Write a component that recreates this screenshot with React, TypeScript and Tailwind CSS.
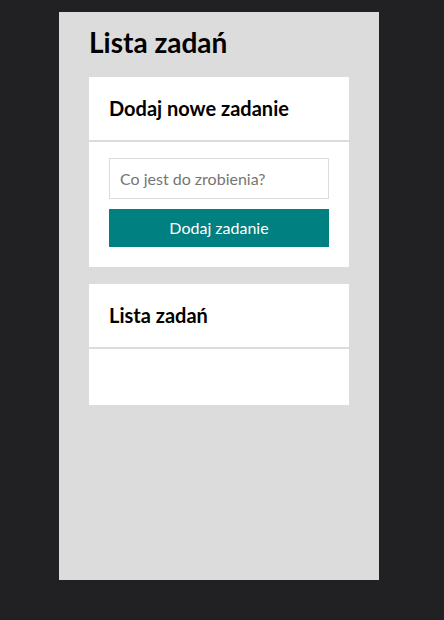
import { useState } from "react";

export default function App() {
  const [task, setTask] = useState("");
  const [tasks, setTasks] = useState<string[]>([]);

  const addTask = () => {
    if (!task.trim()) return;
    setTasks([...tasks, task.trim()]);
    setTask("");
  };

  return (
    <div
      className="min-h-screen bg-[#212123] pt-[12px] pl-[59px]"
      style={{ fontFamily: "Lato, 'Noto Sans', sans-serif" }}
    >
      <div className="flex h-[568px] w-[320px] flex-col bg-[#dcdcdc] px-[30px] pt-[13px]">
        <h1 className="mb-[18px] text-[28px] font-bold leading-[34px] text-black">
          Lista zadań
        </h1>

        <section className="bg-white">
          <h2 className="border-b-2 border-[#dcdcdc] px-5 pt-[19px] pb-[20px] text-[20px] font-bold leading-[24px] text-black">
            Dodaj nowe zadanie
          </h2>
          <div className="flex flex-col gap-[10px] px-5 pt-4 pb-5">
            <input
              value={task}
              onChange={(e) => setTask(e.target.value)}
              placeholder="Co jest do zrobienia?"
              className="h-[41px] w-full border border-[#dcdcdc] px-[10px] text-base text-black outline-none placeholder:text-[#757575]"
            />
            <button
              onClick={addTask}
              className="h-[38px] w-full bg-[#008080] text-base text-white"
            >
              Dodaj zadanie
            </button>
          </div>
        </section>

        <section className="mt-[17px] bg-white">
          <h2 className="border-b-2 border-[#dcdcdc] px-5 pt-[19px] pb-[20px] text-[20px] font-bold leading-[24px] text-black">
            Lista zadań
          </h2>
          <ul className="min-h-[56px] px-5 py-4">
            {tasks.map((t, i) => (
              <li key={i} className="text-base text-black">
                {t}
              </li>
            ))}
          </ul>
        </section>
      </div>
    </div>
  );
}
